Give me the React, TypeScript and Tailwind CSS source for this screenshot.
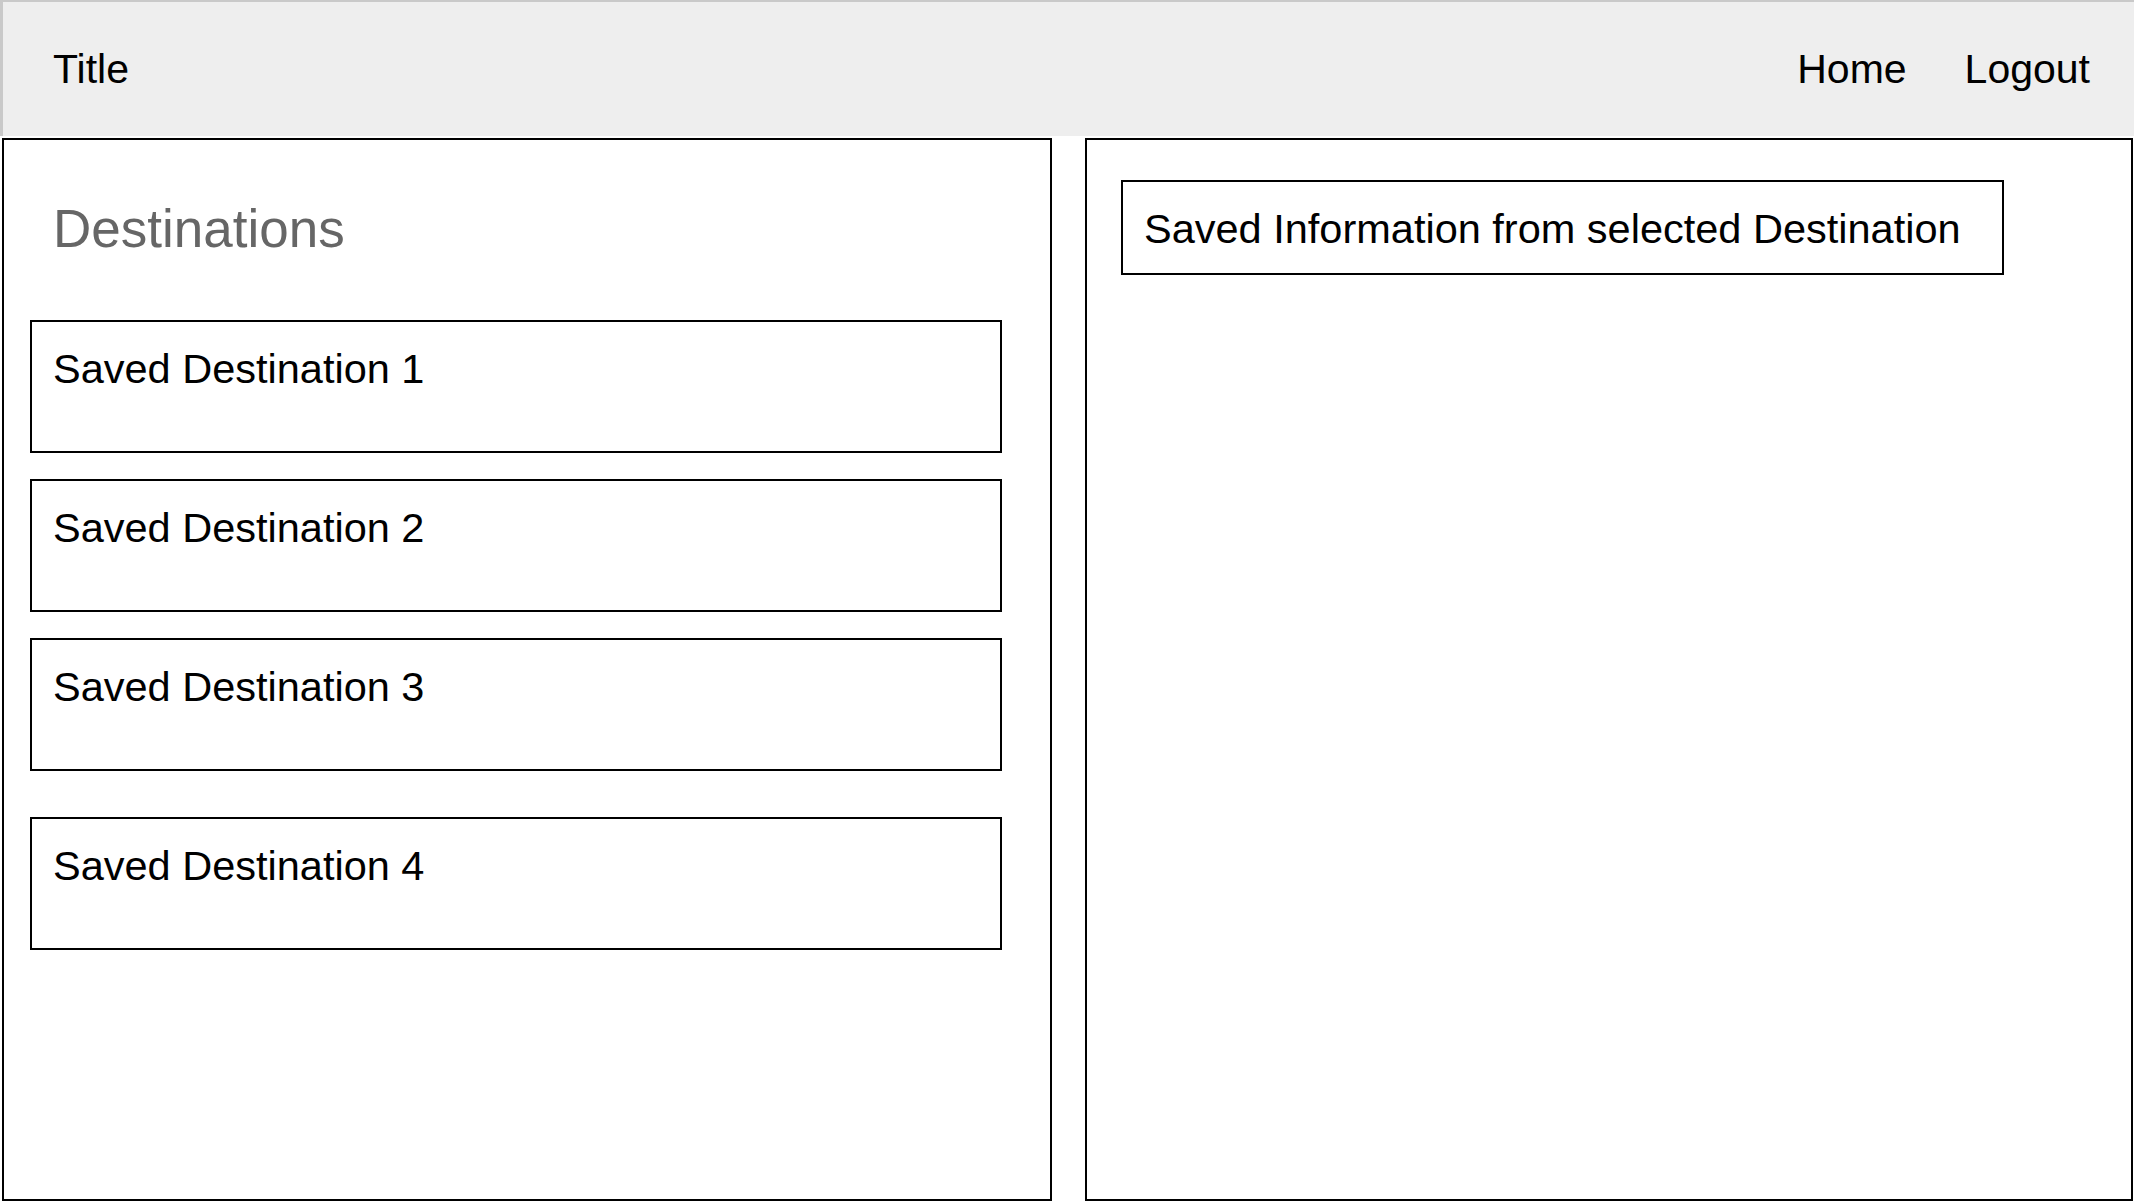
const destinations = ['Saved Destination 1', 'Saved Destination 2', 'Saved Destination 3', 'Saved Destination 4'];

const DestinationCard = ({ name, className = '' }: { name: string; className?: string }) => (
    <div className={`h-[133px] w-[972px] border-2 border-black bg-white pl-[21px] pt-[26px] ${className}`}>
        <p className="text-[41.5px] leading-none text-black">{name}</p>
    </div>
);

const App = () => {
    return (
        <div className="w-[2134px] h-[1202px] bg-white overflow-hidden font-['Liberation_Sans',Arial,sans-serif]">
            {/* Header */}
            <header className="h-[136px] flex items-center justify-between bg-[#eeeeee] border-t-2 border-l-[3px] border-[#c9c9c9] pl-[50px] pr-[44px] pt-px">
                <span className="text-[41px] leading-none text-black">Title</span>
                <nav className="flex items-center gap-[58px] text-[41px] leading-none text-black">
                    <a>Home</a>
                    <a>Logout</a>
                </nav>
            </header>

            {/* Panels */}
            <main className="flex gap-[33px] pl-[2px] pt-[2px]">
                <section className="w-[1050px] h-[1063px] border-2 border-black bg-white pl-[26px]">
                    <h2 className="mt-[62px] pl-[23px] text-[53px] leading-none text-[#666666]">Destinations</h2>
                    <div className="mt-[65px] flex flex-col">
                        {destinations.map((d, i) => (
                            <DestinationCard
                                key={d}
                                name={d}
                                className={i === 0 ? '' : i === 3 ? 'mt-[46px]' : 'mt-[26px]'}
                            />
                        ))}
                    </div>
                </section>

                <section className="w-[1048px] h-[1063px] border-2 border-black bg-white pl-[34px] pt-[40px]">
                    <div className="w-[883px] h-[95px] border-2 border-black pl-[21px] pt-[26px]">
                        <p className="text-[41.5px] leading-none text-black whitespace-nowrap">
                            Saved Information from selected Destination
                        </p>
                    </div>
                </section>
            </main>
        </div>
    );
};

export default App;
